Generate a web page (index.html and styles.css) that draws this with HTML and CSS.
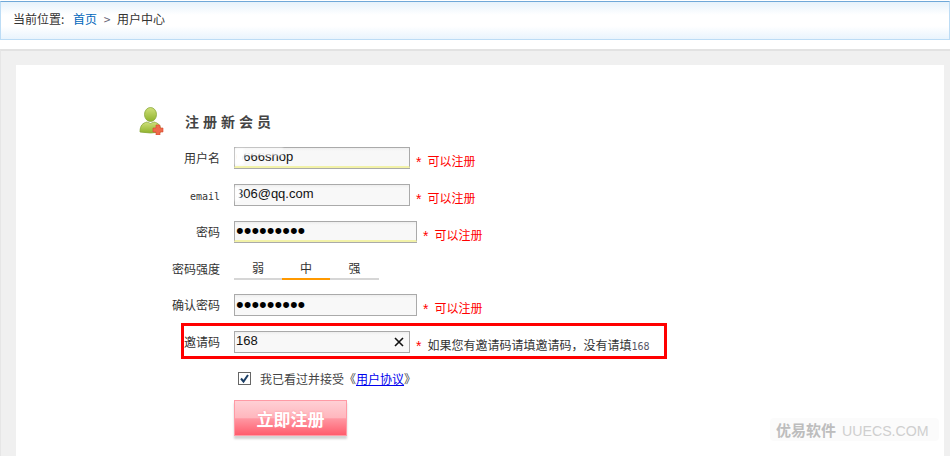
FILE: index.html
```html
<!DOCTYPE html>
<html lang="zh-CN">
<head>
    <meta charset="UTF-8">
    <title>注册新会员</title>
    <link rel="stylesheet" href="styles.css">
</head>
<body>
    <div class="crumbs">
        当前位置: <a href="#" class="home">首页</a> <span class="sep">&gt;</span> 用户中心
    </div>

    <div class="panel">
        <div class="inner">
            <div class="title">
                <svg class="title-icon" width="26" height="28" viewBox="0 0 26 28">
                    <defs>
                        <linearGradient id="green" x1="0" y1="0" x2="0" y2="1">
                            <stop offset="0" stop-color="#cfe07a"/>
                            <stop offset="1" stop-color="#8fb22c"/>
                        </linearGradient>
                    </defs>
                    <ellipse cx="11.5" cy="7.5" rx="6" ry="7" fill="url(#green)" stroke="#8aa83a" stroke-width="0.8"/>
                    <path d="M1 25 C1 18 4 16 8 15 Q11.500 18 15 15 C19 16 22 18 22 25 Q11.500 27 1 25Z" fill="url(#green)" stroke="#8aa83a" stroke-width="0.8"/>
                    <path d="M17 18h4v3h3v4h-3v3h-4v-3h-3v-4h3z" fill="#ee6a4c" stroke="#d9482c" stroke-width="0.6"/>
                </svg>
                <h2>注册新会员</h2>
            </div>

            <form class="reg-form">
                <div class="row">
                    <label>用户名</label>
                    <div class="field">
                        <input type="text" class="short filled" value="6666shop">
                        <span class="smudge"></span>
                    </div>
                    <span class="star">*</span><span class="msg">可以注册</span>
                </div>
                <div class="row">
                    <label class="latin">email</label>
                    <div class="field">
                        <input type="text" class="short" value="306@qq.com">
                        <span class="smudge-small"></span>
                    </div>
                    <span class="star">*</span><span class="msg">可以注册</span>
                </div>
                <div class="row">
                    <label>密码</label>
                    <div class="field">
                        <input type="password" class="long filled" value="123456789">
                    </div>
                    <span class="star">*</span><span class="msg">可以注册</span>
                </div>
                <div class="row row-strength">
                    <label>密码强度</label>
                    <div class="strength">
                        <span>弱</span>
                        <span class="on">中</span>
                        <span>强</span>
                    </div>
                </div>
                <div class="row">
                    <label>确认密码</label>
                    <div class="field">
                        <input type="password" class="long" value="123456789">
                    </div>
                    <span class="star">*</span><span class="msg">可以注册</span>
                </div>
                <div class="row invite">
                    <div class="mark"></div>
                    <label>邀请码</label>
                    <div class="field">
                        <input type="text" class="short" value="168">
                        <svg class="clear" width="10" height="10" viewBox="0 0 10 10">
                            <path d="M1 1L9 9M9 1L1 9" stroke="#111" stroke-width="1.600"/>
                        </svg>
                    </div>
                    <span class="star">*</span><span class="hint">如果您有邀请码请填邀请码，没有请填<span class="code">168</span></span>
                </div>
                <div class="agree">
                    <span class="check">
                        <svg width="11" height="11" viewBox="0 0 11 11">
                            <path d="M2 5.500L4.500 8.500L9 2" fill="none" stroke="#1c3f66" stroke-width="2"/>
                        </svg>
                    </span>
                    <span>我已看过并接受《<a href="#">用户协议</a>》</span>
                </div>
                <button type="button" class="submit">立即注册</button>
            </form>
        </div>
    </div>

    <div class="watermark"><b>优易软件</b> UUECS.COM</div>
</body>
</html>
```

FILE: styles.css
```css
* {
    margin: 0;
    padding: 0;
    box-sizing: border-box;
}

html, body {
    height: 456px;
    overflow: hidden;
}

body {
    position: relative;
    background: #fff;
    color: #333;
    font-family: "Noto Sans CJK SC", "Liberation Sans", sans-serif;
    font-size: 12px;
}

.crumbs {
    height: 39px;
    margin-top: 1px;
    padding-left: 12px;
    line-height: 34px;
    border: 1px solid #bcdcf5;
    border-top-color: #6fa8d8;
    background: linear-gradient(#e6f2fb 0%, #fff 35%, #fff 65%, #e9f4fd 100%);
}

.home {
    color: #0066bb;
    text-decoration: none;
    margin-left: 6px;
}

.sep {
    color: #667;
    margin: 0 4px;
}

.panel {
    height: 407px;
    margin-top: 9px;
    padding: 14px 6px 0 16px;
    background: #f0f0f0;
    border-top: 2px solid #e2e2e2;
    border-left: 1px solid #e6e6e6;
}

.inner {
    height: 393px;
    margin-left: -1px;
    background: #fff;
}

.title {
    display: flex;
    align-items: center;
    height: 82px;
    padding: 30px 0 0 123px;
}

.title h2 {
    margin-left: 20px;
    font-size: 14px;
    font-weight: bold;
    letter-spacing: 4px;
    color: #444;
}

.reg-form {
    margin-left: 104px;
}

.row {
    position: relative;
    display: flex;
    height: 37px;
}

.row-strength {
    height: 36px;
}

.row label {
    width: 100px;
    height: 22px;
    margin-right: 14px;
    line-height: 22px;
    text-align: right;
    color: #333;
}

.row label.latin {
    padding-top: 2px;
    font-family: "DejaVu Sans Mono", monospace;
    font-size: 10px;
}

.field {
    position: relative;
    height: 22px;
}

.field input {
    display: block;
    height: 22px;
    padding: 0 1px 4px;
    border: 1px solid #aaa;
    background: linear-gradient(#eeeeee 0, #f8f8f8 3px, #f8f8f8 100%);
    color: #111;
    font-family: "Liberation Sans", sans-serif;
    font-size: 13px;
    outline: none;
}

.field input[type="password"] {
    padding-bottom: 1px;
    font-size: 22px;
    color: #000;
}

.field input.short {
    width: 176px;
}

.field input.long {
    width: 183px;
}

.field input.filled {
    height: 21px;
    border-bottom: 2px solid #f2f2a8;
    box-shadow: 0 1px 0 #aaa;
}

.field input.short.filled {
    padding-bottom: 1px;
}

/* blurred-out part of the account name */
.smudge {
    position: absolute;
    left: 1px;
    top: 1px;
    width: 48px;
    height: 7px;
    background: #fafafa;
    filter: blur(1px);
}

.smudge::after {
    content: "";
    position: absolute;
    left: 0;
    top: 0;
    width: 9px;
    height: 17px;
    background: #fff;
}

.smudge-small {
    position: absolute;
    left: 1px;
    top: 3px;
    width: 5px;
    height: 14px;
    background: #fff;
    filter: blur(1px);
}

.clear {
    position: absolute;
    right: 6px;
    top: 6px;
}

.star {
    margin-left: 6px;
    padding-top: 6px;
    color: #f00;
    font-family: "Liberation Sans", sans-serif;
    font-size: 14px;
    line-height: 18px;
}

.msg,
.hint {
    margin-left: 6px;
    padding-top: 5px;
    line-height: 18px;
}

.msg {
    color: #f00;
}

.code {
    font-family: "DejaVu Sans Mono", monospace;
    font-size: 10px;
    color: #556;
}

.strength {
    display: flex;
    height: 22px;
}

.strength span {
    width: 48px;
    height: 22px;
    line-height: 19px;
    text-align: center;
    border-bottom: 2px solid #d6d6d6;
    color: #333;
}

.strength span:last-child {
    width: 49px;
}

.strength span.on {
    border-bottom-color: #ff9900;
}

.mark {
    position: absolute;
    left: 61px;
    top: -8px;
    width: 486px;
    height: 36px;
    border: 3px solid #f00;
}

.agree {
    display: flex;
    align-items: center;
    height: 32px;
    padding: 0 0 12px 118px;
    color: #444;
}

.agree a {
    color: #0000ee;
}

.check {
    display: flex;
    align-items: center;
    justify-content: center;
    width: 13px;
    height: 13px;
    margin-right: 9px;
    background: #fff;
    border: 1px solid #666;
}

.submit {
    display: block;
    width: 113px;
    height: 36px;
    margin-left: 114px;
    border: 1px solid #ff9aa5;
    background: linear-gradient(#ffd0d5 0%, #ffb6bd 50%, #ff97a2 52%, #ff5d6d 100%);
    box-shadow: 0 3px 2px #d4d4d4;
    color: #fff;
    font-family: "Noto Sans CJK SC", sans-serif;
    font-size: 17px;
    font-weight: bold;
    text-shadow: 0 0 2px #ff8c98;
}

.watermark {
    position: absolute;
    left: 770px;
    top: 418px;
    width: 169px;
    height: 23px;
    padding-left: 6px;
    line-height: 23px;
    border-radius: 4px;
    background: #fbfbfb;
    color: #cfcfcf;
    font-family: "Liberation Sans", sans-serif;
    font-size: 14.200px;
    white-space: nowrap;
}

.watermark b {
    margin-right: 2px;
    color: #bdbdbd;
    font-family: "Noto Sans CJK SC", sans-serif;
    font-size: 15px;
}
```
